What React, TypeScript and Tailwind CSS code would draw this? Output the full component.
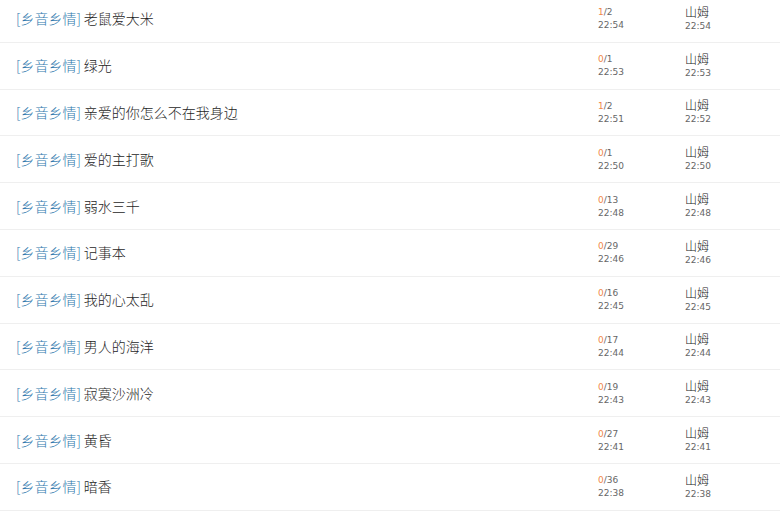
import React from "react";

type Topic = {
  title: string;
  replies: number;
  views: number;
  postTime: string;
  author: string;
  lastTime: string;
};

const topics: Topic[] = [
  { title: "老鼠爱大米", replies: 1, views: 2, postTime: "22:54", author: "山姆", lastTime: "22:54" },
  { title: "绿光", replies: 0, views: 1, postTime: "22:53", author: "山姆", lastTime: "22:53" },
  { title: "亲爱的你怎么不在我身边", replies: 1, views: 2, postTime: "22:51", author: "山姆", lastTime: "22:52" },
  { title: "爱的主打歌", replies: 0, views: 1, postTime: "22:50", author: "山姆", lastTime: "22:50" },
  { title: "弱水三千", replies: 0, views: 13, postTime: "22:48", author: "山姆", lastTime: "22:48" },
  { title: "记事本", replies: 0, views: 29, postTime: "22:46", author: "山姆", lastTime: "22:46" },
  { title: "我的心太乱", replies: 0, views: 16, postTime: "22:45", author: "山姆", lastTime: "22:45" },
  { title: "男人的海洋", replies: 0, views: 17, postTime: "22:44", author: "山姆", lastTime: "22:44" },
  { title: "寂寞沙洲冷", replies: 0, views: 19, postTime: "22:43", author: "山姆", lastTime: "22:43" },
  { title: "黄昏", replies: 0, views: 27, postTime: "22:41", author: "山姆", lastTime: "22:41" },
  { title: "暗香", replies: 0, views: 36, postTime: "22:38", author: "山姆", lastTime: "22:38" },
];

const cjk = "font-['Microsoft_YaHei','Noto_Sans_CJK_SC',sans-serif]";
const num = "font-['DejaVu_Sans','Noto_Sans_CJK_SC',sans-serif]";

const TopicRow = ({ t }: { t: Topic }) => (
  <div className="flex h-[46.8px] items-center border-b border-[#efefef]">
    <div className={`flex-1 pl-4 text-[14px] font-light ${cjk}`}>
      <a className="text-[#2f78ad]">[乡音乡情]</a>
      <span className="ml-[3px] text-[#1e1e1e]">{t.title}</span>
    </div>
    <div className={`w-[87px] ${num} text-[9px] leading-[13px] pt-[1px]`}>
      <div>
        <span className="text-[#f0874a]">{t.replies}</span>
        <span className="text-[#666]">/{t.views}</span>
      </div>
      <div className="text-[#666]">{t.postTime}</div>
    </div>
    <div className="w-[95px] leading-[14px]">
      <div className={`${cjk} text-[12px] font-light text-[#222]`}>{t.author}</div>
      <div className={`${num} text-[9px] text-[#666]`}>{t.lastTime}</div>
    </div>
  </div>
);

export default function App() {
  return (
    <div className="h-[515px] w-[780px] overflow-hidden bg-white">
      <div className="mt-[-4px]">
        {topics.map((t) => (
          <TopicRow key={t.title} t={t} />
        ))}
      </div>
    </div>
  );
}
